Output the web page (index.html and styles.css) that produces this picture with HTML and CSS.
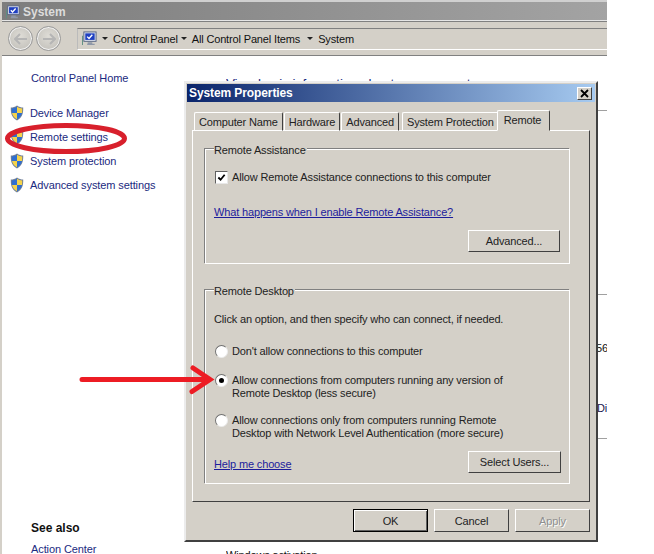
FILE: index.html
```html
<!DOCTYPE html>
<html lang="en">
<head>
<meta charset="utf-8">
<title>System Properties</title>
<link rel="stylesheet" href="styles.css">
</head>
<body>
<svg class="defs" width="0" height="0" aria-hidden="true">
  <defs>
    <symbol id="shield" viewBox="0 0 14 16">
      <path d="M7 .5C5 2 3 2.600.8 2.600c-.2 5.600.8 10 6.200 12.900 5.400-2.900 6.400-7.300 6.200-12.900C11 2.600 9 2 7 .5z" fill="#6f7f99"/>
      <path d="M7 1.800V8H2c-.2-1.600-.2-3-.2-4.500C3.700 3.400 5.400 2.900 7 1.800z" fill="#2f6fd0"/>
      <path d="M7 1.800c1.600 1.100 3.300 1.600 5.200 1.700 0 1.500 0 2.900-.2 4.500H7z" fill="#f5d34a"/>
      <path d="M2 8h5v6.300C4 12.600 2.600 10.500 2 8z" fill="#f5d34a"/>
      <path d="M7 8h5c-.6 2.500-2 4.600-5 6.300z" fill="#2f6fd0"/>
    </symbol>
    <symbol id="computer" viewBox="0 0 16 16">
      <rect x="2" y="1" width="13" height="10" fill="#dfe6f5" stroke="#55617f"/>
      <rect x="3.500" y="2.500" width="10" height="7" fill="#1f3fc0"/>
      <path d="M5.500 6l2 2 3.500-4" fill="none" stroke="#fff" stroke-width="1.500"/>
      <path d="M6 12h5v1.500h2.500V15h-8v-1.500H6z" fill="#8f98a8"/>
      <path d="M0 5h1v10H0z" fill="#5d8f80"/>
    </symbol>
  </defs>
</svg>

<div class="window">
  <div class="titlebar">
    <svg class="title-icon"><use href="#computer"/></svg>
    <span class="title-text">System</span>
  </div>
  <div class="toolbar">
    <div class="nav">
      <span class="nav-btn"><svg class="nav-arrow" viewBox="0 0 14 12"><path d="M6 1L1 6l5 5M1 6h12" fill="none" stroke="#b5b5b5" stroke-width="2"/></svg></span>
      <span class="nav-btn"><svg class="nav-arrow" viewBox="0 0 14 12"><path d="M8 1l5 5-5 5M13 6H1" fill="none" stroke="#b5b5b5" stroke-width="2"/></svg></span>
    </div>
    <div class="address">
      <svg class="addr-icon"><use href="#computer"/></svg>
      <span class="caret"></span><span class="crumb">Control Panel</span>
      <span class="caret"></span><span class="crumb long">All Control Panel Items</span>
      <span class="caret"></span><span class="crumb">System</span>
    </div>
  </div>
  <div class="main">
    <nav class="sidebar">
      <a class="side-link home">Control Panel Home</a>
      <ul class="side-list">
        <li class="side-item"><svg class="shield"><use href="#shield"/></svg><a class="side-link">Device Manager</a></li>
        <li class="side-item"><svg class="shield"><use href="#shield"/></svg><a class="side-link">Remote settings</a></li>
        <li class="side-item"><svg class="shield"><use href="#shield"/></svg><a class="side-link">System protection</a></li>
        <li class="side-item"><svg class="shield"><use href="#shield"/></svg><a class="side-link">Advanced system settings</a></li>
      </ul>
      <div class="see-also">See also</div>
      <a class="side-link action">Action Center</a>
    </nav>
    <section class="content">
      <h1 class="heading">View basic information about your computer</h1>
      <div class="sec sec-one"></div>
      <div class="sec sec-two">
        <div class="tail-num">56</div>
        <div class="tail-link">Di</div>
      </div>
      <div class="sec sec-three">Windows activation</div>
    </section>
  </div>
</div>

<div class="dialog">
  <div class="dlg-title">
    <span>System Properties</span>
    <span class="close"><svg class="close-x" viewBox="0 0 9 9"><path d="M1 1l7 7M8 1L1 8" stroke="#000" stroke-width="1.800"/></svg></span>
  </div>
  <div class="tabs">
    <span class="tab">Computer Name</span>
    <span class="tab">Hardware</span>
    <span class="tab tab-adv">Advanced</span>
    <span class="tab">System Protection</span>
    <span class="tab active">Remote</span>
  </div>
  <div class="panel">
    <div class="group group-a">
      <span class="legend">Remote Assistance</span>
      <label class="check-row"><span class="check"><svg class="tick" viewBox="0 0 10 10"><path d="M1.500 5l2.500 2.500L8.500 2" fill="none" stroke="#000" stroke-width="2"/></svg></span>Allow Remote Assistance connections to this computer</label>
      <a class="link what">What happens when I enable Remote Assistance?</a>
      <div class="btn-row"><span class="btn adv">Advanced...</span></div>
    </div>
    <div class="group group-b">
      <span class="legend">Remote Desktop</span>
      <p class="intro">Click an option, and then specify who can connect, if needed.</p>
      <div class="radio-row r1"><span class="radio"></span><span>Don't allow connections to this computer</span></div>
      <div class="radio-row r2"><span class="radio on"></span><span>Allow connections from computers running any version of<br>Remote Desktop (less secure)</span></div>
      <div class="radio-row r3"><span class="radio"></span><span>Allow connections only from computers running Remote<br>Desktop with Network Level Authentication (more secure)</span></div>
      <div class="help-row"><a class="link help">Help me choose</a><span class="btn wide">Select Users...</span></div>
    </div>
  </div>
  <div class="actions">
    <span class="btn act default">OK</span>
    <span class="btn act">Cancel</span>
    <span class="btn act disabled">Apply</span>
  </div>
</div>

<svg class="markup" viewBox="0 0 654 554" aria-hidden="true">
  <ellipse class="mark-line" cx="66" cy="138.500" rx="58.500" ry="13"/>
  <path class="mark-line arrow" d="M82 379.500H207M193 368l17 11.500-18 12"/>
</svg>
</body>
</html>
```

FILE: styles.css
```css
* { box-sizing: border-box; }
html, body { margin: 0; height: 100%; }
body {
  width: 654px;
  height: 554px;
  position: relative;
  overflow: hidden;
  background: #fff;
  font: 11px/14px "Liberation Sans", Arial, sans-serif;
  letter-spacing: -0.15px;
  color: #222;
}
.defs { position: absolute; }
a { color: inherit; }

.window {
  width: 607px;
  height: 554px;
  display: flex;
  flex-direction: column;
  border-left: 2px solid #d4d0c8;
  overflow: hidden;
}
.titlebar {
  height: 21px;
  margin-left: -2px;
  padding: 2px 0 0 6px;
  display: flex;
  align-items: center;
  gap: 3px;
  background: linear-gradient(90deg, #7d7d7d, #a3a3a3);
  border-top: 2px solid #d0d0d0;
  border-bottom: 1px solid #e6e6e6;
}
.title-icon { width: 14px; height: 14px; }
.title-text { font-weight: bold; font-size: 12px; letter-spacing: 0; color: #dcdcdc; }
.toolbar {
  height: 35px;
  margin-left: -2px;
  padding-left: 8px;
  display: flex;
  align-items: center;
  background: #d4d0c8;
  border-top: 1px solid #808080;
  border-bottom: 1px solid #808080;
}
.nav { display: flex; gap: 3px; }
.nav-btn {
  width: 25px;
  height: 25px;
  border-radius: 50%;
  border: 1px solid #9a9a9a;
  background: radial-gradient(circle at 50% 40%, #dedcd6, #bebcb6);
  box-shadow: inset 0 0 0 1px #f2f2f2;
  display: flex;
  align-items: center;
  justify-content: center;
}
.nav-arrow { width: 14px; height: 12px; }
.address {
  margin-left: 16px;
  flex: 1;
  height: 22px;
  padding-left: 4px;
  display: flex;
  align-items: center;
  border-top: 1px solid #808080;
  border-bottom: 1px solid #fff;
  border-left: 1px solid #bbb;
  color: #111;
}
.addr-icon { width: 15px; height: 15px; margin-right: 5px; }
.caret {
  width: 0;
  height: 0;
  margin-right: 5px;
  border-left: 3px solid transparent;
  border-right: 3px solid transparent;
  border-top: 3px solid #222;
}
.crumb { margin-right: 3px; }
.crumb.long { margin-right: 7px; }

.main { flex: 1; display: flex; min-height: 0; }
.sidebar {
  width: 224px;
  flex: none;
  padding: 15px 0 0 8px;
  display: flex;
  flex-direction: column;
  color: #1b2a80;
}
.side-link { display: block; padding-left: 21px; letter-spacing: -0.1px; }
.side-list { list-style: none; margin: 21px 0 0; padding: 0; }
.side-item { height: 24px; display: flex; align-items: flex-start; }
.side-item .side-link { padding-left: 6px; }
.shield { width: 14px; height: 16px; flex: none; margin-top: -1px; }
.see-also { margin: auto 0 0 21px; font-size: 12px; letter-spacing: 0; font-weight: bold; color: #111; }
.action { margin-top: 7px; margin-bottom: -2px; }

.content { flex: 1; min-width: 0; padding-top: 19px; overflow: hidden; color: #111; }
.heading { margin: 0; font-size: 13.500px; line-height: 18px; font-weight: normal; white-space: nowrap; color: #1b2a80; }
.sec { border-top: 1px solid #a0a0a0; }
.sec-one { margin-top: 17px; height: 184px; }
.sec-two { height: 144px; padding: 46px 0 0 370px; white-space: nowrap; }
.tail-link { margin-top: 46px; color: #1a1a50; padding-left: 1px; }
.sec-three { padding-top: 109px; }

.dialog {
  position: absolute;
  left: 184px;
  top: 81px;
  width: 414px;
  height: 461px;
  padding: 1px;
  background: #d4d0c8;
  border: 2px solid;
  border-color: #ececec #404040 #404040 #ececec;
  display: flex;
  flex-direction: column;
}
.dlg-title {
  height: 18px;
  flex: none;
  padding: 0 3px 0 2px;
  display: flex;
  align-items: center;
  justify-content: space-between;
  background: linear-gradient(90deg, #0a246a, #a6caf0);
  color: #fff;
  font-weight: bold;
  font-size: 12px;
  letter-spacing: -0.1px;
}
.close {
  width: 15px;
  height: 13px;
  background: #d4d0c8;
  border: 1px solid;
  border-color: #fff #404040 #404040 #fff;
  display: flex;
  align-items: center;
  justify-content: center;
}
.close-x { width: 9px; height: 9px; }
.tabs {
  margin: 6px 0 -1px 7px;
  height: 23px;
  flex: none;
  display: flex;
  align-items: flex-end;
  position: relative;
  z-index: 1;
}
.tab {
  height: 19px;
  padding: 2px 4px 0;
  margin-right: 1px;
  background: #d4d0c8;
  border: 1px solid;
  border-color: #fff #404040 #fff #fff;
  border-radius: 2px 2px 0 0;
  white-space: nowrap;
}
.tab-adv { margin-right: 3px; }
.tab.active {
  height: 21px;
  margin: 0 0 0 -3px;
  padding: 2px 8px 0 6px;
  border-bottom-color: #d4d0c8;
}
.panel {
  margin: 0 5px;
  height: 372px;
  flex: none;
  padding: 18px 19px 0 12px;
  border: 1px solid;
  border-color: #fff #404040 #404040 #fff;
}
.group {
  position: relative;
  padding: 0 9px 0 8px;
  border: 1px solid #fff;
  box-shadow: -1px -1px 0 #808080;
}
.group-a { height: 115px; padding-top: 20px; }
.group-b { height: 194px; margin-top: 26px; padding: 21px 8px 0 8px; }
.legend { position: absolute; top: -7px; left: 8px; padding: 0 1px 0 0; background: #d4d0c8; }
.check-row { display: flex; align-items: center; padding-left: 1px; }
.check {
  width: 13px;
  height: 13px;
  margin-right: 4px;
  background: #fff;
  border: 1px solid;
  border-color: #606060 #e8e8e8 #e8e8e8 #606060;
  display: flex;
  align-items: center;
  justify-content: center;
}
.tick { width: 9px; height: 9px; }
.link { display: block; color: #1c1c9c; text-decoration: underline; }
.what { margin-top: 21px; }
.help { margin-top: 4px; }
.btn-row { display: flex; justify-content: flex-end; margin-top: 11px; }
.btn {
  height: 22px;
  background: #d4d0c8;
  border: 1px solid;
  border-color: #fff #404040 #404040 #fff;
  display: flex;
  align-items: center;
  justify-content: center;
}
.adv { width: 92px; }
.wide { width: 93px; }
.intro { margin: 0; }
.radio-row { display: flex; align-items: flex-start; line-height: 13px; padding-left: 1px; }
.r1 { margin-top: 19px; }
.r2 { margin-top: 16px; }
.r3 { margin-top: 14px; }
.radio {
  width: 13px;
  height: 13px;
  flex: none;
  margin-right: 4px;
  border-radius: 50%;
  background: #fff;
  border: 1px solid #707070;
  border-right-color: #ececec;
  border-bottom-color: #ececec;
  display: flex;
  align-items: center;
  justify-content: center;
}
.radio.on::after { content: ""; width: 5px; height: 5px; border-radius: 50%; background: #000; }
.help-row { margin-top: 11px; display: flex; align-items: center; justify-content: space-between; }
.actions { margin: 7px 5px 0 0; display: flex; justify-content: flex-end; gap: 6px; }
.act { width: 75px; height: 23px; }
.default { border: 1px solid #000; box-shadow: inset 1px 1px 0 #fff, inset -1px -1px 0 #606060; }
.disabled { color: #8f8f8f; text-shadow: 1px 1px 0 #fff; }

.markup { position: absolute; left: 0; top: 0; width: 654px; height: 554px; pointer-events: none; }
.mark-line { fill: none; stroke: #d8202c; stroke-width: 5; }
.arrow { stroke: #ed1c24; stroke-width: 5; stroke-linecap: round; stroke-linejoin: miter; }
```
